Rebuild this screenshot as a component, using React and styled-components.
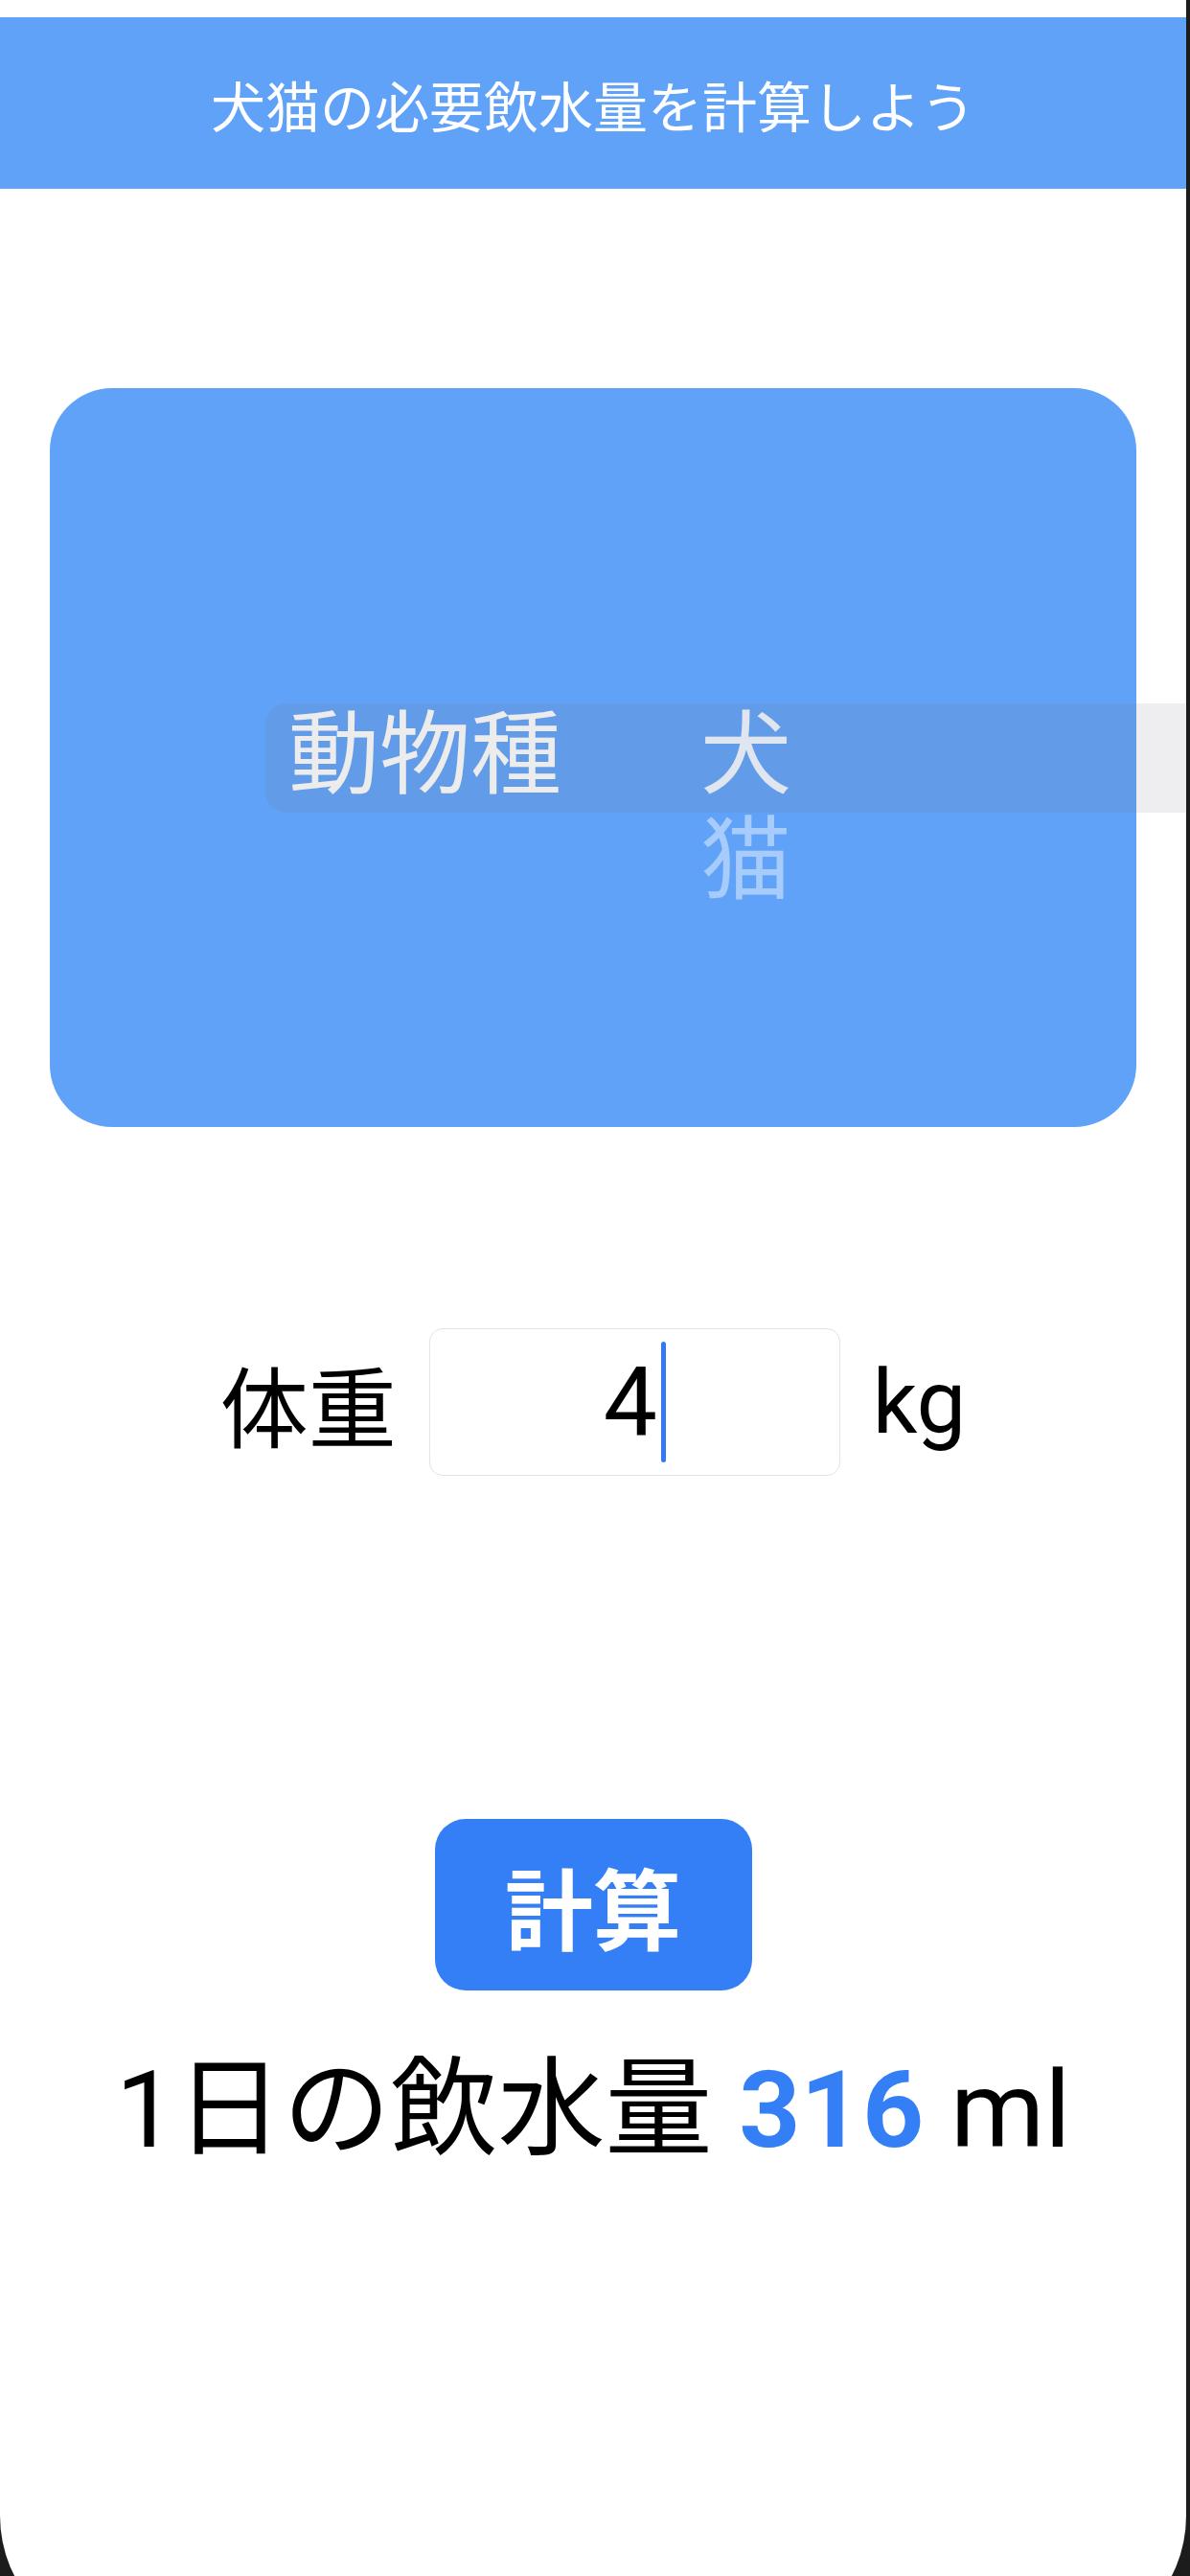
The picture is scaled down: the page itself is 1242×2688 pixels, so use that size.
import React from 'react';
import styled, { createGlobalStyle } from 'styled-components';

const GlobalStyle = createGlobalStyle`
  html, body {
    margin: 0;
    padding: 0;
    background: #1c1c1c;
    overflow: hidden;
  }
  * {
    box-sizing: border-box;
  }
`;

const Screen = styled.div`
  width: 1238px;
  height: 2765px;
  background: #fff;
  border-radius: 0 0 140px 140px;
  overflow: hidden;
  padding-top: 18px;
  display: flex;
  flex-direction: column;
  font-family: Roboto, "Noto Sans CJK JP", sans-serif;
  color: #000;
`;

const Header = styled.header`
  height: 179px;
  background: #60a2f7;
  color: #fff;
  font-size: 57px;
  display: flex;
  align-items: center;
  justify-content: center;
`;

const Main = styled.main`
  display: flex;
  flex-direction: column;
  align-items: center;
`;

const Card = styled.section`
  margin-top: 208px;
  width: 1134px;
  height: 771px;
  background: #60a2f7;
  border-radius: 65px;
  display: flex;
  align-items: center;
  padding-left: 225px;
`;

const Band = styled.div`
  flex-shrink: 0;
  width: 1000px;
  height: 114px;
  background: rgba(118, 118, 128, 0.12);
  border-radius: 22px 0 0 22px;
  display: flex;
  align-items: flex-start;
  padding-left: 24px;
`;

const PickerLabel = styled.span`
  font-size: 95px;
  line-height: 110px;
  color: #ececec;
`;

const Wheel = styled.div`
  margin-left: 145px;
  height: 114px;
  display: flex;
  flex-direction: column;
`;

const Option = styled.span`
  font-size: 95px;
  line-height: 110px;
  color: ${p => (p.$selected ? '#dfe6ef' : 'rgba(255, 255, 255, 0.45)')};
`;

const WeightRow = styled.div`
  margin-top: 210px;
  display: flex;
  align-items: center;
  gap: 34px;
`;

const RowLabel = styled.span`
  font-size: 92px;
`;

const InputBox = styled.div`
  width: 429px;
  height: 154px;
  border: 1.5px solid #e3e3e3;
  border-radius: 14px;
  display: flex;
  align-items: center;
  justify-content: center;
`;

const Value = styled.span`
  font-size: 100px;
`;

const Caret = styled.span`
  width: 5px;
  height: 126px;
  margin-left: 4px;
  border-radius: 3px;
  background: #3478f6;
`;

const Unit = styled.span`
  font-size: 92px;
`;

const CalcButton = styled.button`
  margin-top: 358px;
  width: 331px;
  height: 179px;
  border: none;
  border-radius: 32px;
  background: #347ff5;
  color: #fff;
  font-family: inherit;
  font-size: 92px;
  font-weight: 700;
  padding: 0;
`;

const Result = styled.p`
  margin: 58px 0 0;
  font-size: 112px;
  line-height: 1.2;
`;

const Amount = styled.b`
  color: #347ff5;
  font-weight: 700;
`;

const App = () => {
  return (
    <>
      <GlobalStyle />
      <Screen>
        <Header>犬猫の必要飲水量を計算しよう</Header>
        <Main>
          <Card>
            <Band>
              <PickerLabel>動物種</PickerLabel>
              <Wheel>
                <Option $selected>犬</Option>
                <Option>猫</Option>
              </Wheel>
            </Band>
          </Card>
          <WeightRow>
            <RowLabel>体重</RowLabel>
            <InputBox>
              <Value>4</Value>
              <Caret />
            </InputBox>
            <Unit>kg</Unit>
          </WeightRow>
          <CalcButton>計算</CalcButton>
          <Result>
            1日の飲水量 <Amount>316</Amount> ml
          </Result>
        </Main>
      </Screen>
    </>
  );
};

export default App;
